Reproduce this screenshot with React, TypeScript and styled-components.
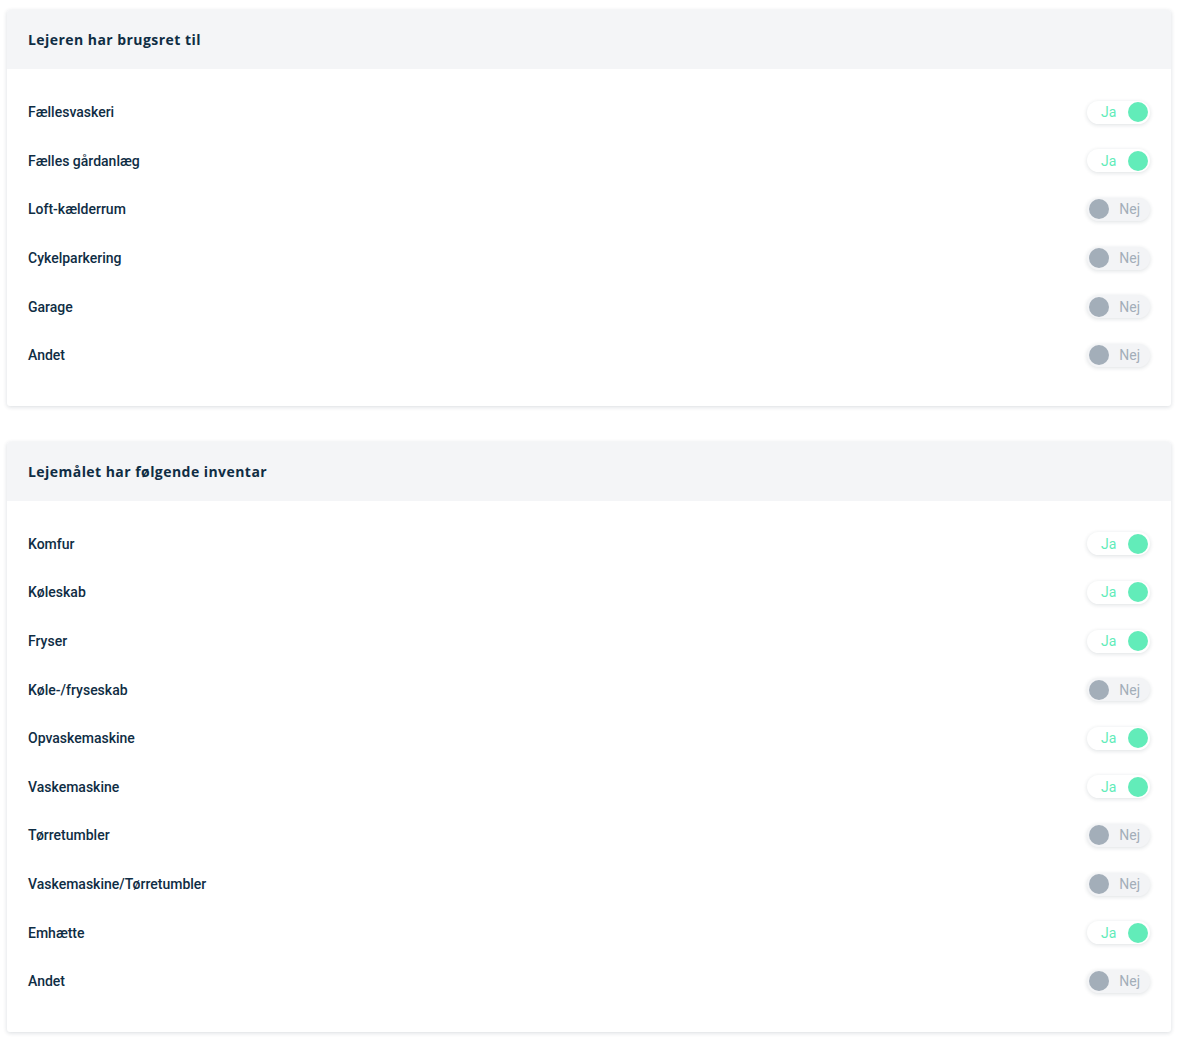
import { FC } from "react";
import styled, { createGlobalStyle } from "styled-components";

const GlobalStyle = createGlobalStyle`
  html, body {
    margin: 0;
    padding: 0;
    background: #ffffff;
  }
  body {
    font-family: Roboto, "Liberation Sans", sans-serif;
    color: #0f2d44;
  }
`;

const Page = styled.div`
  display: flex;
  flex-direction: column;
  row-gap: 36px;
  padding: 10px 9px 8px 7px;
`;

const Card = styled.section`
  background: #ffffff;
  border-radius: 3px;
  box-shadow: 0 1px 4px rgba(20, 40, 60, 0.16);
  overflow: hidden;
`;

const CardHeader = styled.header`
  display: flex;
  align-items: center;
  height: 59px;
  padding: 0 21px;
  background: #f4f5f7;
`;

const Title = styled.h2`
  margin: 0;
  font-family: "Open Sans", "Liberation Sans", sans-serif;
  font-size: 14px;
  font-weight: 700;
  letter-spacing: 0.45px;
  color: #0f2d44;
`;

const Body = styled.div`
  display: flex;
  flex-direction: column;
  padding: 19px 21px 26px;
`;

const Row = styled.div`
  display: flex;
  align-items: center;
  justify-content: space-between;
  height: 48.6px;
`;

const Label = styled.span`
  font-size: 14px;
  font-weight: 500;
  color: #0f2d44;
`;

const Toggle = styled.button<{ $on: boolean }>`
  display: flex;
  flex-direction: ${({ $on }) => ($on ? "row" : "row-reverse")};
  align-items: center;
  justify-content: space-between;
  width: 63px;
  height: 23px;
  padding: ${({ $on }) => ($on ? "0 2px 0 14px" : "0 10px 0 2px")};
  border: none;
  border-radius: 12px;
  background: ${({ $on }) => ($on ? "#ffffff" : "#f3f4f6")};
  box-shadow: 0 1px 4px rgba(20, 40, 60, 0.14);
  cursor: pointer;
  font-family: Roboto, "Liberation Sans", sans-serif;
  font-size: 14px;
  color: ${({ $on }) => ($on ? "#62ecb9" : "#a3aeb9")};
`;

const Knob = styled.span<{ $on: boolean }>`
  width: 20px;
  height: 20px;
  border-radius: 50%;
  background: ${({ $on }) => ($on ? "#62ecb9" : "#a3aeb9")};
`;

type Item = { label: string; on: boolean };

const usage: Item[] = [
  { label: "Fællesvaskeri", on: true },
  { label: "Fælles gårdanlæg", on: true },
  { label: "Loft-kælderrum", on: false },
  { label: "Cykelparkering", on: false },
  { label: "Garage", on: false },
  { label: "Andet", on: false },
];

const inventory: Item[] = [
  { label: "Komfur", on: true },
  { label: "Køleskab", on: true },
  { label: "Fryser", on: true },
  { label: "Køle-/fryseskab", on: false },
  { label: "Opvaskemaskine", on: true },
  { label: "Vaskemaskine", on: true },
  { label: "Tørretumbler", on: false },
  { label: "Vaskemaskine/Tørretumbler", on: false },
  { label: "Emhætte", on: true },
  { label: "Andet", on: false },
];

const Section: FC<{ title: string; items: Item[] }> = ({ title, items }) => (
  <Card>
    <CardHeader>
      <Title>{title}</Title>
    </CardHeader>
    <Body>
      {items.map((item) => (
        <Row key={item.label}>
          <Label>{item.label}</Label>
          <Toggle $on={item.on} type="button">
            <span>{item.on ? "Ja" : "Nej"}</span>
            <Knob $on={item.on} />
          </Toggle>
        </Row>
      ))}
    </Body>
  </Card>
);

const App: FC = () => (
  <>
    <GlobalStyle />
    <Page>
      <Section title="Lejeren har brugsret til" items={usage} />
      <Section title="Lejemålet har følgende inventar" items={inventory} />
    </Page>
  </>
);

export default App;
